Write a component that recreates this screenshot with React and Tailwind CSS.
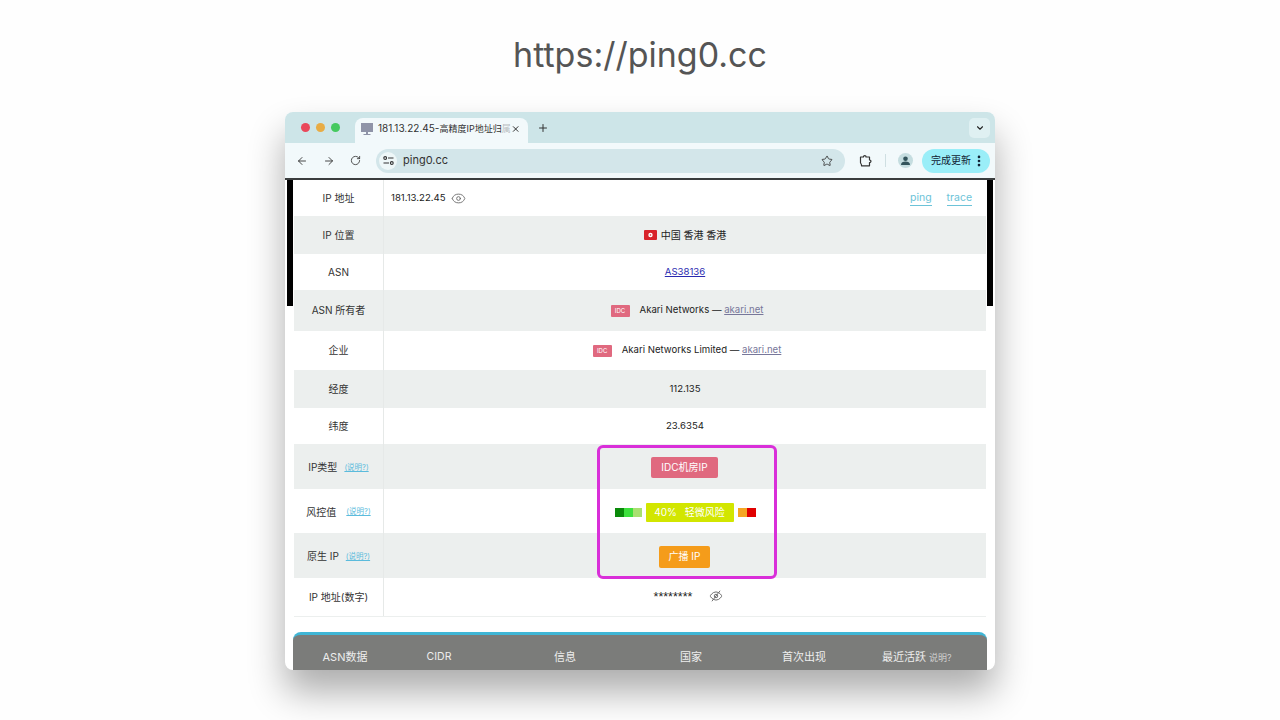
import React from 'react';
import { ArrowLeft, ArrowRight, RotateCw, Star, ChevronDown, Plus, X, Eye, EllipsisVertical } from 'lucide-react';

const font = "font-['Inter','Noto_Sans_CJK_SC',sans-serif]";

const Help = () => (
    <a className="text-[7.5px] text-[#5bbbdc] underline">(说明?)</a>
);

const IdcTag = () => (
    <span className="ml-[4px] w-[19px] h-[12px] flex items-center justify-center bg-[#e0697f] rounded-[1px] text-[6px] text-white">IDC</span>
);

const HkFlag = () => (
    <svg width="13" height="10" viewBox="0 0 13 10">
        <rect width="13" height="10" rx="1" fill="#d8232a" />
        <circle cx="6.5" cy="5" r="2.2" fill="#fff" />
        <circle cx="6.5" cy="5" r="0.8" fill="#d8232a" />
    </svg>
);

const Row = ({ label, help, gap, height, grey, shift, children }) => (
    <div className={`flex ${height} ${grey ? 'bg-[#ecefee]' : 'bg-white'}`}>
        <div className={`w-[90px] shrink-0 flex items-center justify-center ${gap} ${shift} border-r border-[#e6e9e8] text-[10px] text-[#333]`}>
            <span>{label}</span>
            {help && <Help />}
        </div>
        <div className={`flex-1 flex items-center justify-center ${shift} text-[#222]`}>{children}</div>
    </div>
);

export default function App() {
    return (
        <div className={`w-[1280px] h-[720px] overflow-hidden bg-[#fefefe] ${font}`}>
            <div className="h-[112px] flex items-center justify-center pb-[3px] text-[34px] text-[#555]">
                https://ping0.cc
            </div>
            <div className="w-[710px] h-[558px] mx-auto flex flex-col overflow-hidden rounded-[8px] bg-white shadow-[0_22px_36px_rgba(0,0,0,0.32)]">
                {/* tab strip */}
                <div className="h-[31px] shrink-0 flex items-end bg-[#cde5e8] pl-[16px] pr-[5px]">
                    <div className="flex items-center gap-[6px] h-[31px]">
                        <span className="w-[9px] h-[9px] rounded-full bg-[#e9485a]" />
                        <span className="w-[9px] h-[9px] rounded-full bg-[#e8ac45]" />
                        <span className="w-[9px] h-[9px] rounded-full bg-[#45c95f]" />
                    </div>
                    <div className="ml-[15px] w-[173px] h-[25px] flex items-center bg-[#f2f9fb] rounded-t-[8px] pl-[6px] pr-[8px] pb-[4px] text-[10px] text-[#333]">
                        <svg width="12" height="12" viewBox="0 0 12 12" className="shrink-0">
                            <rect x="0" y="0" width="12" height="9" fill="#8f94a8" />
                            <rect x="5" y="9" width="2" height="2" fill="#8f94a8" />
                            <rect x="2.500" y="11" width="7" height="1" fill="#8f94a8" />
                        </svg>
                        <span className="ml-[5px] whitespace-nowrap">
                            181.13.22.45-<span className="text-[9px]">高精度IP地址归<span className="opacity-30">属</span></span>
                        </span>
                        <X size={10} strokeWidth={2.4} className="ml-auto text-[#222]" />
                    </div>
                    <Plus size={12} strokeWidth={2} className="ml-[9px] mb-[9px] text-[#333]" />
                    <div className="ml-auto mb-[5px] w-[21px] h-[20px] flex items-center justify-center rounded-[5px] bg-[#dff0f2]">
                        <ChevronDown size={10} strokeWidth={2.6} className="text-[#222]" />
                    </div>
                </div>
                {/* toolbar */}
                <div className="h-[35px] shrink-0 flex items-center bg-[#f2f9fb] pl-[11px] pr-[5px] text-[#333]">
                    <ArrowLeft size={12} strokeWidth={1.8} />
                    <ArrowRight size={12} strokeWidth={1.8} className="ml-[15px]" />
                    <RotateCw size={11} strokeWidth={1.8} className="ml-[15px]" />
                    <div className="ml-[15px] w-[469px] h-[24px] flex items-center rounded-full bg-[#d3e6ea] pl-[3px] pr-[12px]">
                        <div className="w-[18px] h-[18px] flex items-center justify-center rounded-full bg-[#eef7f8]">
                            <svg width="11" height="9" viewBox="0 0 11 9" fill="none" stroke="#333" strokeWidth="1.1">
                                <circle cx="2.2" cy="2" r="1.4" />
                                <path d="M5 2h5.5M0.500 7H6" />
                                <circle cx="8.8" cy="7" r="1.4" />
                            </svg>
                        </div>
                        <span className="ml-[6px] text-[11px] text-[#333]">ping0.cc</span>
                        <Star size={12} strokeWidth={1.7} className="ml-auto" />
                    </div>
                    <svg width="13" height="13" viewBox="0 0 13 13" fill="none" stroke="#333" strokeWidth="1.2" strokeLinejoin="round" className="ml-[14px]">
                        <path d="M1.500 3H4.500C4.200 1.200 7.300 1.200 7 3H10.500V6C12.400 5.700 12.400 8.800 10.500 8.500V11.800H2.500C3 10 1 9.500 1.500 8V3Z" />
                    </svg>
                    <span className="ml-[13px] w-px h-[13px] bg-[#cfdfe2]" />
                    <div className="ml-[12px] w-[15px] h-[15px] flex items-center justify-center rounded-full bg-[#c5dde0] overflow-hidden">
                        <svg width="15" height="15" viewBox="0 0 15 15" fill="#33545c">
                            <circle cx="7.5" cy="5.8" r="2.3" />
                            <path d="M3 12c0-2.400 2-3.400 4.500-3.400S12 9.600 12 12z" />
                        </svg>
                    </div>
                    <div className="ml-[9px] w-[68px] h-[24px] flex items-center rounded-full bg-[#9aeef8] pl-[9px] text-[10px] text-[#123]">
                        完成更新
                        <EllipsisVertical size={14} strokeWidth={2.6} className="ml-[1px]" />
                    </div>
                </div>
                {/* page */}
                <div className="relative flex-1 min-h-0 overflow-hidden border-t-2 border-[#3a3d3e] px-[9px] text-[9.6px]">
                    <div className="absolute left-[2px] top-0 w-[6px] h-[126px] bg-black" />
                    <div className="absolute right-[2px] top-0 w-[6px] h-[126px] bg-black" />
                    <Row label="IP 地址" height="h-[36px]">
                        <div className="w-full flex items-center pl-[7px] pr-[14px]">
                            <span>181.13.22.45</span>
                            <Eye size={15} strokeWidth={1.4} className="ml-[5px] text-[#666]" />
                            <a className="ml-auto text-[10.5px] leading-[13px] text-[#6cc3d8] border-b border-[#6cc3d8] pb-[1px]">ping</a>
                            <a className="ml-[15px] text-[10.5px] leading-[13px] text-[#6cc3d8] border-b border-[#6cc3d8] pb-[1px]">trace</a>
                        </div>
                    </Row>
                    <Row label="IP 位置" height="h-[38px]" grey>
                        <HkFlag />
                        <span className="ml-[4px] text-[10px]">中国 香港 香港</span>
                    </Row>
                    <Row label="ASN" height="h-[36px]">
                        <a className="text-[#2a2ab0] underline">AS38136</a>
                    </Row>
                    <Row label="ASN 所有者" height="h-[41px]" grey>
                        <IdcTag />
                        <span className="ml-[10px]">Akari Networks — <a className="text-[#77779a] underline">akari.net</a></span>
                    </Row>
                    <Row label="企业" height="h-[39px]">
                        <IdcTag />
                        <span className="ml-[10px]">Akari Networks Limited — <a className="text-[#77779a] underline">akari.net</a></span>
                    </Row>
                    <Row label="经度" height="h-[38px]" grey>112.135</Row>
                    <Row label="纬度" height="h-[36px]">23.6354</Row>
                    <Row label="IP类型" help gap="gap-[7px]" shift="pt-[2px]" height="h-[45px]" grey>
                        <span className="mr-[1px] w-[67px] h-[21px] flex items-center justify-center rounded-[2px] bg-[#e0697f] text-[10px] text-white">IDC机房IP</span>
                    </Row>
                    <Row label="风控值" help gap="gap-[10px]" shift="pt-[2px]" height="h-[44px]">
                        <span className="w-[9px] h-[9px] bg-[#0a8a0a]" />
                        <span className="w-[9px] h-[9px] bg-[#3de03d]" />
                        <span className="w-[9px] h-[9px] bg-[#a8e070]" />
                        <span className="mx-[4px] w-[88px] h-[19px] flex items-center justify-center gap-[8px] rounded-[1px] bg-[#d2e600] text-[10px] text-white">
                            <span>40%</span>
                            <span>轻微风险</span>
                        </span>
                        <span className="w-[9px] h-[9px] bg-[#f5a623]" />
                        <span className="w-[9px] h-[9px] bg-[#e00000]" />
                    </Row>
                    <Row label="原生 IP" help gap="gap-[7px]" shift="pt-[2px]" height="h-[45px]" grey>
                        <span className="mr-[1px] w-[51px] h-[22px] flex items-center justify-center rounded-[2px] bg-[#f59c1a] text-[10px] text-white">广播 IP</span>
                    </Row>
                    <Row label="IP 地址(数字)" height="h-[38px]">
                        <span className="ml-[7px] text-[12.5px] font-['Liberation_Sans',sans-serif]">********</span>
                        <svg width="14" height="14" viewBox="0 0 24 24" fill="none" stroke="#666" strokeWidth="1.6" className="ml-[17px] -mt-[2px]">
                            <path d="M2 12s3.500-7 10-7 10 7 10 7-3.500 7-10 7-10-7-10-7Z" />
                            <circle cx="12" cy="12" r="3" />
                            <path d="M5 21 19 3" />
                        </svg>
                    </Row>
                    <div className="h-px bg-[#ecefee]" />
                    <div className="mt-[15px] -mx-px h-[60px] grid grid-cols-[104px_84px_168px_84px_142px_1fr] pt-[14px] rounded-t-[8px] border-t-[3px] border-[#3fb6d6] bg-[#7b7c7a] text-[11px] text-[#eeeeee]">
                        <span className="text-center">ASN数据</span>
                        <span className="text-center text-[10.5px]">CIDR</span>
                        <span className="text-center">信息</span>
                        <span className="text-center">国家</span>
                        <span className="text-center">首次出现</span>
                        <span className="pl-[7px] whitespace-nowrap">最近活跃 <span className="text-[9px] text-[#cfcfcf]">说明?</span></span>
                    </div>
                    <div className="pointer-events-none absolute left-[312px] top-[265px] w-[180px] h-[134px] rounded-[6px] border-[3px] border-[#d92fd9]" />
                </div>
            </div>
        </div>
    );
}
